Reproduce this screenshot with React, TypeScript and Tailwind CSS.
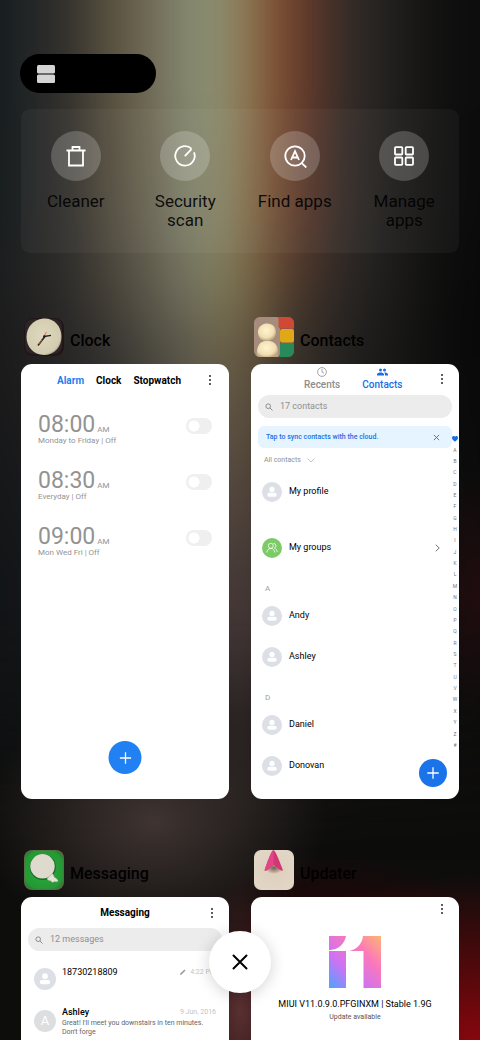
import type { ReactNode } from "react";

const alarms = [
  { time: "08:00", repeat: "Monday to Friday" },
  { time: "08:30", repeat: "Everyday" },
  { time: "09:00", repeat: "Mon Wed Fri" },
];

const letters = "ABCDEFGHIJKLMNOPQRSTUVWXYZ#".split("");

const Backdrop = () => (
  <div aria-hidden="true" className="absolute inset-0 -z-10 overflow-hidden bg-[#0d0d0c]">
    <div className="absolute -inset-12 blur-lg">
      <div className="absolute inset-0 bg-[linear-gradient(90deg,#111417_8%,#201d1c_29%,#3d3432_43%,#4a3c3b_50%,#2d2625_58%,#151312_71%,#0d0c0c_92%)] [mask-image:linear-gradient(#000_58%,transparent_78%)]" />
      <div className="absolute inset-0 bg-[linear-gradient(90deg,#1f1d1d_8%,#2a2827_18%,#3a3835_26%,#545247_34%,#6b6857_41%,#77704f_47%,#65573d_53%,#40382e_59%,#2c2926_66%,#1b1b1a_76%,#090909_88%)] [mask-image:linear-gradient(#000_28%,transparent_56%)]" />
      <div className="absolute inset-0 bg-[linear-gradient(90deg,#151c1e_8%,#222627_13%,#33302c_20%,#57503f_27%,#6c6450_33%,#7f806a_39%,#8a9074_44%,#8d7f5c_50%,#87603d_54%,#6f412d_59%,#523329_64%,#362d29_68%,#262422_74%,#171615_81%,#0c0c0c_90%)] [mask-image:linear-gradient(#000_12%,#000c_22%,transparent_35%)]" />
    </div>
    <div className="absolute inset-0 bg-[radial-gradient(ellipse_36%_12%_at_32%_79%,#3f3431,transparent),radial-gradient(ellipse_14%_12%_at_100%_57%,#2d0c1099,transparent),radial-gradient(ellipse_10%_12%_at_50%_97%,#5a3032,transparent),radial-gradient(ellipse_60%_16%_at_100%_100%,#86070e,#66070bcc_40%,transparent),radial-gradient(ellipse_30%_7%_at_68%_89%,#260506,transparent)]" />
  </div>
);

const Tool = ({ label, children }: { label: string; children: ReactNode }) => (
  <button className="flex flex-col items-center gap-[11px]">
    <span className="flex size-[50px] items-center justify-center rounded-full bg-white/20">
      <svg viewBox="0 0 24 24" className="size-6 fill-none stroke-white stroke-[1.8]">
        {children}
      </svg>
    </span>
    <span className="max-w-[80px] text-[17px] leading-[19px] text-black/90">{label}</span>
  </button>
);

const AppWindow = ({ title, icon, children }: { title: string; icon: ReactNode; children: ReactNode }) => (
  <section>
    <h2 className="flex h-[47px] items-start gap-1.5 pl-[3px] text-[16px] font-medium">
      <svg viewBox="0 0 40 40" className="size-10 shrink-0">
        {icon}
      </svg>
      <span className="pt-3 leading-6">{title}</span>
    </h2>
    <div className="relative h-[435px] overflow-hidden rounded-[11px] bg-white">{children}</div>
  </section>
);

const MoreButton = () => (
  <button aria-label="More options" className="flex h-4 w-4 items-center justify-center">
    <svg viewBox="0 0 4 12" className="h-3 w-1 fill-[#111]">
      <circle cx="2" cy="2" r="0.9" />
      <circle cx="2" cy="6" r="0.9" />
      <circle cx="2" cy="10" r="0.9" />
    </svg>
  </button>
);

const SearchBox = ({ placeholder }: { placeholder: string }) => (
  <label className="flex h-[23px] items-center gap-[7px] rounded-full bg-[#ececec] px-[7px]">
    <svg viewBox="0 0 10 10" className="size-2 shrink-0 fill-none stroke-[#777]">
      <circle cx="4" cy="4" r="2.9" />
      <path d="M6.2 6.2 9.4 9.4" />
    </svg>
    <input
      type="search"
      aria-label={placeholder}
      placeholder={placeholder}
      className="min-w-0 flex-1 bg-transparent text-[9px] outline-none placeholder:text-[#8f8f8f]"
    />
  </label>
);

const Avatar = ({ className }: { className: string }) => (
  <svg viewBox="0 0 20 20" className={className}>
    <circle cx="10" cy="10" r="10" fill="#dcdfe5" />
    <circle cx="10" cy="7.4" r="2.6" fill="#fff" />
    <rect x="5.3" y="10.8" width="9.4" height="4" rx="2" fill="#fff" />
  </svg>
);

const AddButton = ({ label, className }: { label: string; className: string }) => (
  <button aria-label={label} className={`absolute flex items-center justify-center rounded-full ${className}`}>
    <svg viewBox="0 0 12 12" className="size-3 stroke-white stroke-[1.3]">
      <path d="M6 .3v11.400M.3 6h11.400" />
    </svg>
  </button>
);

const Person = ({ name }: { name: string }) => (
  <li className="flex h-[41px] items-center gap-[7px] pl-1 text-[9px]">
    <Avatar className="size-5" />
    {name}
  </li>
);

const ClockWindow = () => (
  <>
    <div className="flex h-8 items-center pl-9 pr-[11px]">
      <nav className="flex flex-1 gap-3 text-[10px] font-bold">
        <button className="text-[#1b80f5]">Alarm</button>
        <button>Clock</button>
        <button>Stopwatch</button>
      </nav>
      <MoreButton />
    </div>
    <ul className="pt-4">
      {alarms.map((alarm) => (
        <li key={alarm.time} className="flex h-14 items-start justify-between px-[17px] text-[#939393]">
          <label htmlFor={alarm.time}>
            <span className="flex h-6 items-baseline gap-0.5 text-[23px] leading-[25px]">
              {alarm.time}
              <span className="text-[8px]">AM</span>
            </span>
            <span className="block text-[8px] leading-[10px]">{alarm.repeat} | Off</span>
          </label>
          <input
            id={alarm.time}
            type="checkbox"
            role="switch"
            className="mt-1.5 h-4 w-[26px] appearance-none rounded-full bg-[#efefef] bg-[radial-gradient(circle_at_8px_8px,#fff_5px,transparent_6px)]"
          />
        </li>
      ))}
    </ul>
    <AddButton label="Add alarm" className="bottom-[25px] left-1/2 size-[33px] -translate-x-1/2 bg-[#2181f3]" />
  </>
);

const ContactsWindow = () => (
  <>
    <div className="flex h-[31px] items-start pl-[53px] pr-[9px] pt-[3px]">
      <nav className="flex flex-1 gap-[22px] text-[10px] font-medium leading-3">
        <button className="flex flex-col items-center gap-0.5 text-[#8d8d8d]">
          <svg viewBox="0 0 10 10" className="size-2.5 fill-none stroke-current">
            <circle cx="5" cy="5" r="4.4" strokeWidth=".8" />
            <path d="M5 2.200V5l2 1.200" strokeWidth=".8" />
          </svg>
          <span>Recents</span>
        </button>
        <button className="flex flex-col items-center gap-0.5 text-[#176fe8]">
          <svg viewBox="1 4 22 16" className="h-2.5 w-[11px] fill-current">
            <path d="M16 11a3 3 0 1 0 0-6 3 3 0 0 0 0 6m-8 0a3 3 0 1 0 0-6 3 3 0 0 0 0 6m0 2c-2.300 0-7 1.200-7 3.500V19h14v-2.500c0-2.300-4.700-3.500-7-3.500m8 0-1 .05c1.200.84 2 2 2 3.450V19h6v-2.500c0-2.300-4.700-3.500-7-3.500" />
          </svg>
          <span>Contacts</span>
        </button>
      </nav>
      <div className="pt-1">
        <MoreButton />
      </div>
    </div>
    <div className="flex items-start">
      <div className="min-w-0 flex-1 pl-[7px]">
        <SearchBox placeholder="17 contacts" />
        <div className="mt-2 flex h-[22px] items-center justify-between rounded-md bg-[#e6f4ff] pl-2 pr-3 text-[7px] font-medium text-[#176fe8]">
          Tap to sync contacts with the cloud.
          <button aria-label="Dismiss">
            <svg viewBox="0 0 8 8" className="size-[7px] stroke-current">
              <path d="m1 1 6 6M7 1 1 7" />
            </svg>
          </button>
        </div>
        <button className="flex h-6 items-center gap-1.5 pl-1.5 text-[7px] text-[#8f8f8f]">
          All contacts
          <svg viewBox="0 0 8 5" className="h-[5px] w-2 fill-none stroke-[#aaa]">
            <path d="m.5.500 3.500 3.500L7.500.500" strokeWidth=".7" />
          </svg>
        </button>
        <ul className="-mt-px">
          <Person name="My profile" />
          <li className="mt-[15px] flex h-[41px] items-center gap-[7px] pl-1 pr-3 text-[9px]">
            <svg viewBox="0 0 20 20" className="size-5 fill-none stroke-white">
              <circle cx="10" cy="10" r="10" fill="#7ccb66" stroke="none" />
              <circle cx="8.800" cy="7.800" r="2.500" strokeWidth=".8" />
              <path d="M4.800 14.500c.2-2.500 1.800-4 4-4s3.800 1.500 4 4M11.500 5.300a2.500 2.500 0 0 1 .9 4.800c1.600.5 2.600 1.900 2.800 3.900" strokeWidth=".8" />
            </svg>
            <span className="flex-1">My groups</span>
            <svg viewBox="0 0 5 8" className="h-2 w-[5px] fill-none stroke-[#777]">
              <path d="M.7.700 4.200 4 .700 7.300" />
            </svg>
          </li>
        </ul>
        <h3 className="mt-[15px] pl-[7px] text-[8px] leading-3 text-[#9a9fa8]">A</h3>
        <ul>
          <Person name="Andy" />
          <Person name="Ashley" />
        </ul>
        <h3 className="mt-[15px] pl-[7px] text-[8px] leading-3 text-[#9a9fa8]">D</h3>
        <ul>
          <Person name="Daniel" />
          <Person name="Donovan" />
        </ul>
      </div>
      <nav aria-label="Jump to letter" className="mt-[38px] flex h-[318px] w-[7px] flex-col pr-px text-[5px] leading-none text-[#777]">
        <svg viewBox="0 0 6 11" className="w-full flex-1 fill-[#176fe8]">
          <path d="M3 8.500C1.500 7.500 0 6.200 0 4.600 0 2.800 2.200 2.300 3 3.500c.8-1.200 3-.7 3 1.100 0 1.600-1.500 2.900-3 3.900" />
        </svg>
        {letters.map((letter) => (
          <a key={letter} href="#contacts" className="flex flex-1 items-center justify-center">
            {letter}
          </a>
        ))}
      </nav>
    </div>
    <AddButton label="Add contact" className="bottom-3 right-3 size-7 bg-[#1a73e8]" />
  </>
);

const MessagingWindow = () => (
  <div className="px-[7px]">
    <div className="grid h-[31px] grid-cols-[16px_1fr_16px] items-center pr-0.5">
      <h3 className="col-start-2 pl-0.5 text-center text-[10px] font-bold">Messaging</h3>
      <MoreButton />
    </div>
    <SearchBox placeholder="12 messages" />
    <ul className="px-1.5 text-[9px]">
      <li className="flex h-[55px] items-center gap-1.5">
        <Avatar className="size-[22px]" />
        <div className="flex h-[26px] flex-1 items-start justify-between leading-3">
          18730218809
          <span className="flex items-center gap-1 text-[7px] text-[#c4c4c4]">
            <svg viewBox="0 0 6 6" className="size-1.5 fill-[#999]">
              <path d="M0 6 .5 4.300 4.500.500l1 1L1.600 5.500z" />
            </svg>
            4:22 PM
          </span>
        </div>
      </li>
      <li className="flex gap-1.5">
        <span className="mt-1 flex size-[22px] shrink-0 items-center justify-center rounded-full bg-[#dddee0] text-[13px] text-white">
          A
        </span>
        <div className="flex-1">
          <div className="flex justify-between leading-3">
            <span className="font-medium">Ashley</span>
            <span className="text-[7px] text-[#c4c4c4]">9 Jun, 2016</span>
          </div>
          <p className="pt-px text-[7px] leading-[9px] text-[#666]">
            Great! I'll meet you downstairs in ten minutes. Don't forge
          </p>
        </div>
      </li>
    </ul>
  </div>
);

const UpdaterWindow = () => (
  <div className="flex flex-col items-center pt-1 text-center">
    <div className="self-end pr-[9px]">
      <MoreButton />
    </div>
    <svg viewBox="0 0 52 52" className="mt-[19px] size-[52px]">
      <defs>
        <linearGradient id="eleven" x1="0" y1="52" x2="52" y2="0" gradientUnits="userSpaceOnUse">
          <stop offset="0" stopColor="#4ba5ff" />
          <stop offset=".33" stopColor="#cc72f4" />
          <stop offset=".68" stopColor="#fb78bb" />
          <stop offset="1" stopColor="#ffb572" />
        </linearGradient>
      </defs>
      <path
        fill="url(#eleven)"
        d="M0 0h17C15.500 8 9.500 13.500 1.500 14H0zM0 15h17v37H0zM34 0h18v52H34.500V15H20c8-1.500 13-7 14-15"
      />
    </svg>
    <p className="mt-[10px] text-[9px] leading-3">MIUI V11.0.9.0.PFGINXM | Stable 1.9G</p>
    <p className="text-[7px] leading-[14px] text-[#555]">Update available</p>
  </div>
);

const clockIcon = (
  <>
    <defs>
      <radialGradient id="clay" cx=".45" cy=".45" r=".6">
        <stop offset="0" stopColor="#ddd8be" />
        <stop offset=".85" stopColor="#d3ccb0" />
        <stop offset="1" stopColor="#a39a82" />
      </radialGradient>
    </defs>
    <rect x="0" y="1" width="40" height="38" rx="9" fill="#211517" />
    <rect x="1" y="2" width="37" height="35" rx="8" fill="#2b2527" />
    <path d="M19 1.500C30 .500 37 9 37.500 19c.3 11-7.500 19.500-18 19C9.500 37.500 2.500 30 2.500 20S9.500 2.500 19 1.500" fill="url(#clay)" />
    <path d="m20 19.500 7-1.200" stroke="#222" strokeWidth="1.300" />
    <path d="M20.500 20 14 28.500" stroke="#33201c" strokeWidth="1.600" />
    <path d="m18 23-3 4M20 19l2.500-4" stroke="#d9574c" strokeWidth=".8" />
    <circle cx="20.300" cy="19.500" r="1.200" fill="#1c1918" />
  </>
);

const contactsIcon = (
  <>
    <defs>
      <radialGradient id="dough" cx=".45" cy=".4" r=".6">
        <stop offset="0" stopColor="#fff4d0" />
        <stop offset=".7" stopColor="#f0deb1" />
        <stop offset="1" stopColor="#bba480" />
      </radialGradient>
      <clipPath id="tile">
        <rect width="40" height="40" rx="6" />
      </clipPath>
    </defs>
    <g clipPath="url(#tile)">
      <rect width="40" height="40" fill="#765f52" />
      <rect width="26" height="40" rx="4" fill="#a58c7d" />
      <rect x="24.500" y="-2" width="16" height="13.500" rx="2.500" fill="#cf4934" />
      <rect x="26" y="12" width="14" height="13.500" rx="2.500" fill="#dfa816" />
      <rect x="26" y="26" width="14" height="15" rx="2.500" fill="#288a5b" />
      <path d="M3 41c-1-8 1-15 6-16.500 7-2 13 1 14.500 6 .8 3 .8 7 .3 10.500z" fill="url(#dough)" />
      <path d="M4 16c-.5-5 3-9 8.500-9.500 6-.3 10 3.500 9.500 9.500-.5 5-4 8-9 8-5.500 0-8.700-3-9-8" fill="url(#dough)" />
    </g>
  </>
);

const messagingIcon = (
  <>
    <defs>
      <radialGradient id="grass" cx=".5" cy=".5" r=".7">
        <stop offset="0" stopColor="#2ba83b" />
        <stop offset=".75" stopColor="#239a35" />
        <stop offset="1" stopColor="#20692e" />
      </radialGradient>
    </defs>
    <rect width="40" height="40" rx="8" fill="#5d6a45" />
    <rect x=".8" y=".8" width="38" height="38" rx="8" fill="url(#grass)" />
    <circle cx="18.800" cy="17" r="13" fill="#166b25" />
    <circle cx="18.500" cy="16.300" r="12.200" fill="#dedbce" />
    <path d="M28.300 23.500c1 .5 1.300 2.500 2.200 3.800 1.500.7 3 2 3.700 3.700-1 1.300-2.500.8-3.700.6-1.800 1.400-3.200.3-4-.9-1.500.1-3-.7-3.500-2.200z" fill="#e6e2d6" stroke="#9c9c84" strokeWidth=".4" />
  </>
);

const updaterIcon = (
  <>
    <defs>
      <radialGradient id="sand" cx=".5" cy=".5" r=".7">
        <stop offset="0" stopColor="#decfbb" />
        <stop offset=".85" stopColor="#e2d6c7" />
        <stop offset="1" stopColor="#a79b8c" />
      </radialGradient>
      <radialGradient id="shade">
        <stop offset="0" stopColor="#5a4236" stopOpacity=".8" />
        <stop offset="1" stopColor="#5a4236" stopOpacity="0" />
      </radialGradient>
    </defs>
    <rect width="40" height="40" rx="7" fill="url(#sand)" />
    <ellipse cx="20" cy="18" rx="9" ry="6" fill="url(#shade)" />
    <path d="M19.500.300c1.500 0 4.500 6.500 9.500 20.200-2.500 1-6-3-9.300-5.700-3.200 2.700-6.700 6.700-9.200 5.700C15 7 18 .300 19.500.300" fill="#d23675" />
    <path d="M19.500.300l.2 14.500c-3.200 2.700-6.700 6.700-9.200 5.700C15 7 18 .300 19.500.300" fill="#e14585" />
  </>
);

const App = () => {
  return (
    <main className="relative isolate h-screen overflow-hidden px-[21px] pt-[54px] font-[Roboto,sans-serif] text-black">
      <Backdrop />

      <button aria-label="Change layout" className="-ml-px flex h-[39px] w-[136px] items-center rounded-full bg-black pl-[17px]">
        <svg viewBox="0 0 18 18" className="size-[18px] fill-[#d4d4d4]">
          <rect width="18" height="8.500" rx="1.500" />
          <rect y="9.500" width="18" height="8.500" rx="1.500" />
        </svg>
      </button>

      <div className="mt-4 grid h-36 grid-cols-4 items-start rounded-[9px] bg-white/[0.04] pt-[22px]">
        <Tool label="Cleaner">
          <path d="M2.500 6.500h19M8.500 6V3h7v3M5 7v14.500h14V7" />
        </Tool>
        <Tool label="Security scan">
          <path d="M18.500 4.700a9.700 9.700 0 1 0 2.500 3.600M11.800 12.200l6.700-7" />
        </Tool>
        <Tool label="Find apps">
          <circle cx="12" cy="12" r="9.700" />
          <path d="m18.500 18.800 4.800 4.700M8 16l4-8.800L16 16M9.500 13.500h5" />
        </Tool>
        <Tool label="Manage apps">
          <rect x="3" y="3.200" width="7.300" height="7.300" rx=".8" />
          <rect x="13.700" y="3.200" width="7.300" height="7.300" rx=".8" />
          <rect x="3" y="13.500" width="7.300" height="7.300" rx=".8" />
          <rect x="13.700" y="13.500" width="7.300" height="7.300" rx=".8" />
        </Tool>
      </div>

      <div className="mt-16 grid grid-cols-2 gap-x-[22px] gap-y-[51px]">
        <AppWindow title="Clock" icon={clockIcon}>
          <ClockWindow />
        </AppWindow>
        <AppWindow title="Contacts" icon={contactsIcon}>
          <ContactsWindow />
        </AppWindow>
        <AppWindow title="Messaging" icon={messagingIcon}>
          <MessagingWindow />
        </AppWindow>
        <AppWindow title="Updater" icon={updaterIcon}>
          <UpdaterWindow />
        </AppWindow>
      </div>

      <button
        aria-label="Close all"
        className="absolute bottom-[47px] left-1/2 flex size-[62px] -translate-x-1/2 items-center justify-center rounded-full bg-white shadow-[0_2px_16px_#0000002e]"
      >
        <svg viewBox="0 0 16 16" className="size-4 stroke-black stroke-2">
          <path d="m1.500 1.500 13 13M14.500 1.500l-13 13" strokeLinecap="round" />
        </svg>
      </button>
    </main>
  );
};

export default App;
